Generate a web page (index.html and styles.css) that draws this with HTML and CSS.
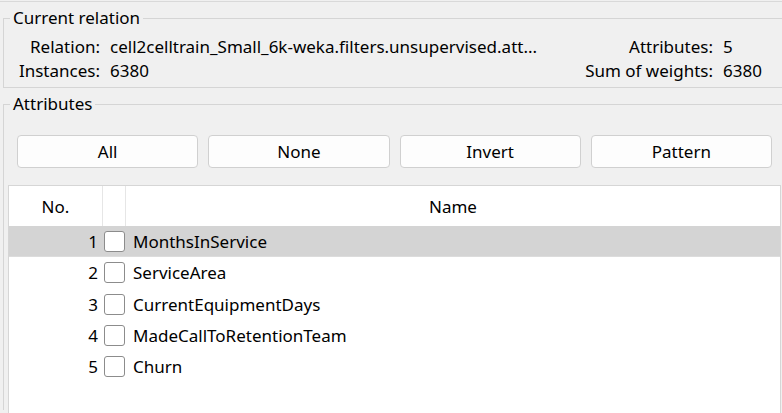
FILE: index.html
```html
<!DOCTYPE html>
<html>
<head>
<meta charset="utf-8">
<link rel="stylesheet" href="styles.css">
</head>
<body>
<div class="top-edge"></div>
<fieldset class="group relation">
  <legend>Current relation</legend>
  <div class="rel-grid">
    <span class="lbl">Relation:</span>
    <span class="val ellip">cell2celltrain_Small_6k-weka.filters.unsupervised.att...</span>
    <span class="lbl">Attributes:</span>
    <span class="val">5</span>
    <span class="lbl">Instances:</span>
    <span class="val">6380</span>
    <span class="lbl">Sum of weights:</span>
    <span class="val">6380</span>
  </div>
</fieldset>
<fieldset class="group attrs">
  <legend>Attributes</legend>
  <div class="buttons">
    <button class="btn">All</button>
    <button class="btn">None</button>
    <button class="btn">Invert</button>
    <button class="btn">Pattern</button>
  </div>
  <div class="table">
    <div class="thead">
      <div class="th c-no">No.</div>
      <div class="th c-chk"></div>
      <div class="th c-name">Name</div>
    </div>
    <div class="row selected">
      <div class="td c-no num">1</div>
      <div class="td c-chk"><span class="box"></span></div>
      <div class="td c-name">MonthsInService</div>
    </div>
    <div class="row">
      <div class="td c-no num">2</div>
      <div class="td c-chk"><span class="box"></span></div>
      <div class="td c-name">ServiceArea</div>
    </div>
    <div class="row">
      <div class="td c-no num">3</div>
      <div class="td c-chk"><span class="box"></span></div>
      <div class="td c-name">CurrentEquipmentDays</div>
    </div>
    <div class="row">
      <div class="td c-no num">4</div>
      <div class="td c-chk"><span class="box"></span></div>
      <div class="td c-name">MadeCallToRetentionTeam</div>
    </div>
    <div class="row">
      <div class="td c-no num">5</div>
      <div class="td c-chk"><span class="box"></span></div>
      <div class="td c-name">Churn</div>
    </div>
  </div>
</fieldset>
</body>
</html>
```
FILE: styles.css
```css
* { box-sizing: border-box; }
html, body {
  margin: 0;
  padding: 0;
  background: #f0f0f0;
  overflow: hidden;
  width: 782px;
  height: 413px;
}
body {
  font-family: "Noto Sans", "Open Sans", sans-serif;
  font-size: 17px;
  color: #000;
}
.top-edge {
  height: 2px;
  border-bottom: 1px solid #d9d9d9;
}
.group {
  margin: 0 -12px 0 3px;
  border: 1px solid #d5d5d5;
  padding: 0 12px 0 4px;
  min-width: 0;
}
.group legend {
  margin-left: 2px;
  padding: 0 3px;
  line-height: 20px;
  font-size: 17px;
}
.relation {
  margin-top: 6px;
  padding-top: 7px;
  padding-bottom: 4px;
  padding-right: 19px;
}
.rel-grid {
  display: grid;
  grid-template-columns: 92px 1fr auto 51px;
  column-gap: 10px;
  line-height: 24px;
  white-space: nowrap;
}
.rel-grid .lbl { text-align: right; }
.rel-grid .val { text-align: left; }
.ellip { overflow: hidden; text-overflow: ellipsis; }
.attrs {
  margin-top: 6px;
  padding-top: 21px;
  padding-bottom: 0;
  border-bottom: none;
  height: 316px;
}
.buttons {
  display: grid;
  grid-template-columns: repeat(4, 1fr);
  column-gap: 10px;
  padding: 0 9px;
  margin-bottom: 17px;
}
.btn {
  height: 33px;
  background: #fdfdfd;
  border: 1px solid #d0d0d0;
  border-radius: 4px;
  font-family: inherit;
  font-size: 17px;
  color: #000;
  padding: 0;
}
.table {
  background: #fff;
  border: 1px solid #d6d6d6;
  border-bottom: none;
  height: 228px;
}
.thead {
  display: flex;
  height: 40px;
}
.th {
  display: flex;
  align-items: center;
  justify-content: center;
  border-right: 1px solid #e6e6e6;
}
.th.c-name { border-right: none; }
.c-no { width: 94px; flex: none; }
.c-chk { width: 23px; flex: none; }
.c-name { flex: 1; }
.row {
  display: flex;
  height: 31.25px;
  align-items: center;
}
.row.selected {
  background: #d4d4d4;
  border-bottom: 1px solid #dcdcdc;
}
.td.num {
  text-align: right;
  padding-right: 5px;
}
.td.c-chk {
  display: flex;
  align-items: center;
}
.box {
  width: 21px;
  height: 21px;
  margin-left: 1px;
  background: #fff;
  border: 1px solid #8c8c8c;
  border-radius: 3px;
}
.td.c-name {
  padding-left: 7px;
}
```
